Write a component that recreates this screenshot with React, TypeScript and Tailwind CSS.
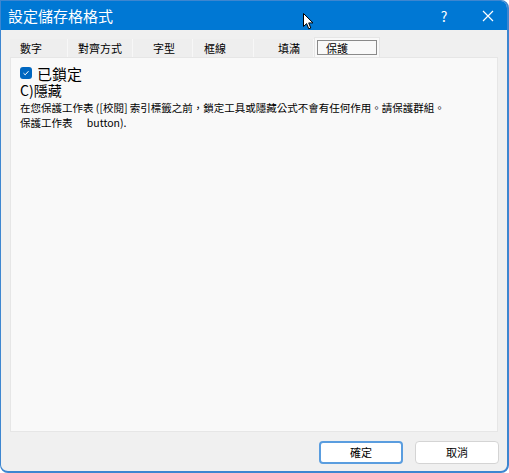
import React from 'react';

const tabs = [
  { label: '數字', w: 'w-[58px]', pad: 'pl-[10px]' },
  { label: '對齊方式', w: 'w-[65px]', pad: 'pl-[10px]' },
  { label: '字型', w: 'w-[60px]', pad: 'pl-[20px]' },
  { label: '框線', w: 'w-[61px]', pad: 'pl-[11px]' },
  { label: '填滿', w: 'w-[60px]', pad: 'pl-[24px]' },
];

const font = { fontFamily: '"Noto Sans CJK TC", "Noto Sans", sans-serif' };

export default function App() {
  return (
    <div className="w-[509px] h-[473px] bg-white relative" style={font}>
      <div className="w-full h-full flex flex-col rounded-tr-lg rounded-b-lg overflow-hidden border border-[#3d86d0] border-b-2 border-r-2 bg-[#f0f0f0]">
        {/* title bar */}
        <div className="h-[29px] bg-[#0078d4] flex items-center text-white shrink-0">
          <div className="pl-[7px] text-[15px] leading-none">設定儲存格格式</div>
          <div className="ml-auto w-[30px] text-center text-[14px] leading-none mr-[14px]">?</div>
          <div className="w-[30px] flex justify-center mr-[4px]">
            <svg width="12" height="12" viewBox="0 0 12 12" stroke="white" strokeWidth="1.2">
              <path d="M1 1L11 11M11 1L1 11" />
            </svg>
          </div>
        </div>

        {/* tabs */}
        <div className="flex items-end pl-[9px] pt-[7px] shrink-0">
          {tabs.map((t) => (
            <div
              key={t.label}
              className={`${t.w} ${t.pad} h-[18px] bg-[#eeeeee] border-r border-[#f7f7f7] text-[11px] leading-[18px] text-black`}
            >
              {t.label}
            </div>
          ))}
          <div className="w-[66px] h-[20px] bg-[#f9f9f9] p-[2px] border-t border-x border-[#e6e6e6]">
            <div className="w-full h-full border border-[#8a8a8a] pl-[8px] text-[11px] leading-[14px] text-black">保護</div>
          </div>
        </div>

        {/* panel */}
        <div className="mx-[9px] h-[375px] bg-[#f9f9f9] border border-[#e6e6e6] shrink-0 pt-[7px] pl-[9px]">
          <div className="flex items-center gap-[5px] h-[16px]">
            <div className="w-[12px] h-[12px] rounded-[3px] bg-[#0067c0] flex items-center justify-center">
              <svg width="8" height="8" viewBox="0 0 8 8" fill="none" stroke="white" strokeWidth="1">
                <path d="M1.5 4.2L3.2 5.8L6.5 2.2" />
              </svg>
            </div>
            <span className="text-[15px] leading-none text-black">已鎖定</span>
          </div>
          <div className="mt-[1px] text-[14px] leading-[17px] text-black">C)隱藏</div>
          <div className="mt-[1px] text-[10.5px] leading-[15px] text-black">
            <div>在您保護工作表 ([校閱] 索引標籤之前，鎖定工具或隱藏公式不會有任何作用。請保護群組。</div>
            <div>保護工作表 <span className="ml-[12px]">button).</span></div>
          </div>
        </div>

        {/* buttons */}
        <div className="flex justify-end gap-[12px] pr-[8px] pt-[9px]">
          <button className="w-[84px] h-[23px] bg-white rounded-[4px] border-2 border-[#5a9ddf] text-[11px] text-black leading-none">
            確定
          </button>
          <button className="w-[84px] h-[23px] bg-white rounded-[4px] border border-[#d4d4d4] text-[11px] text-black leading-none">
            取消
          </button>
        </div>
      </div>

      {/* mouse cursor */}
      <svg className="absolute left-[303px] top-[13px]" width="11" height="17" viewBox="0 0 11 17">
        <path d="M0.5 0.5L0.5 13.5L3.6 10.6L5.8 15.8L7.8 15L5.7 9.9L10 9.9Z" fill="white" stroke="black" strokeWidth="1" />
      </svg>
    </div>
  );
}
